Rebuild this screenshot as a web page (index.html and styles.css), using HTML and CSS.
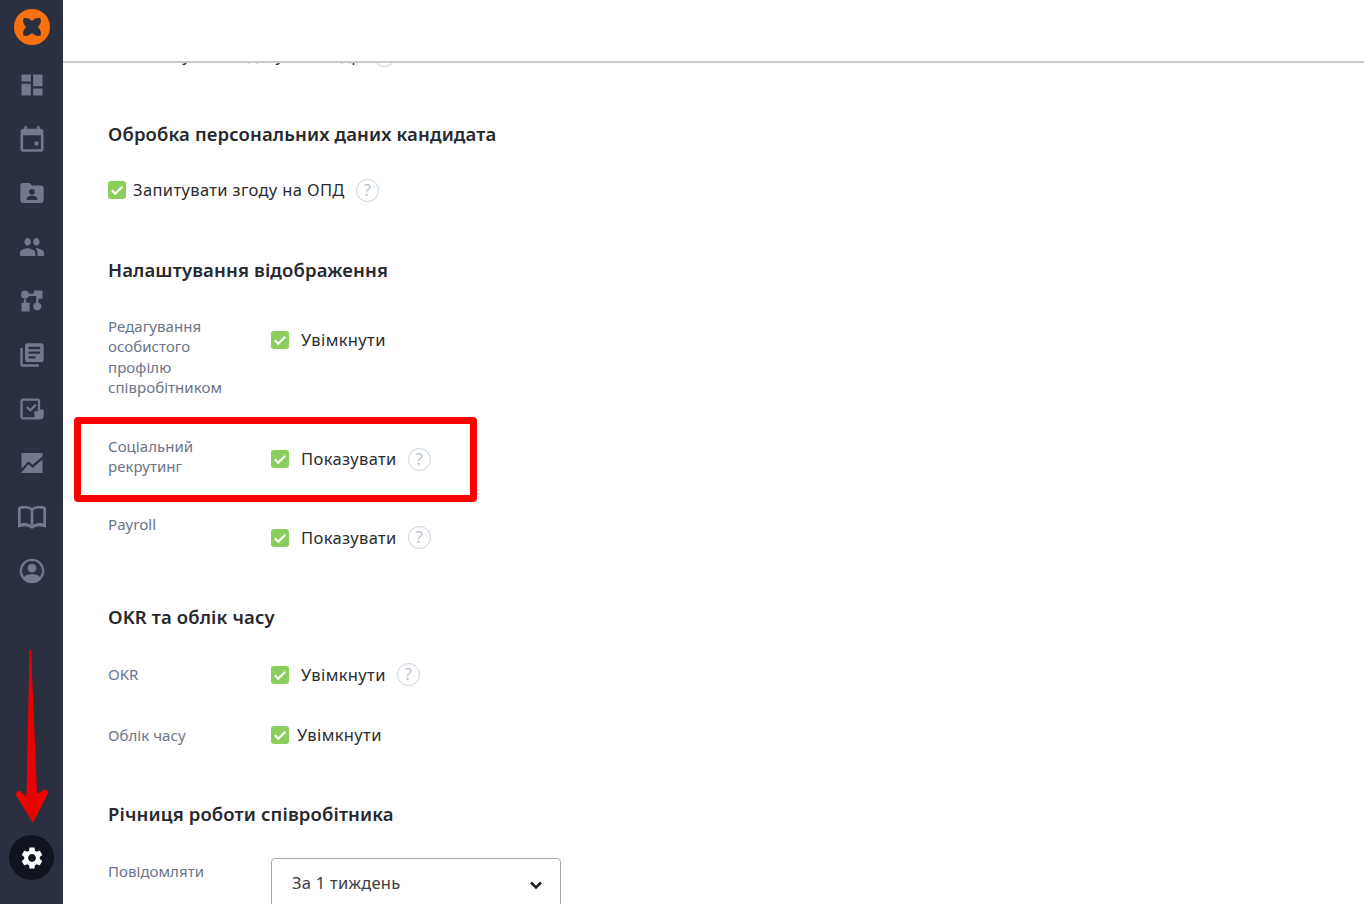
FILE: index.html
```html
<!DOCTYPE html>
<html lang="uk">
<head>
<meta charset="utf-8">
<title>Налаштування</title>
<link rel="stylesheet" href="styles.css">
</head>
<body>
<div class="app">
  <nav class="sidebar">
    <div class="logo">
      <svg viewBox="0 0 36 36" width="36" height="36"><circle cx="18" cy="18" r="18" fill="#f9700f"/><path d="M9.500 9.500c3-1.200 6 .2 8.500 2.500 2.500-2.300 5.500-3.700 8.500-2.500 1.200 3-.2 6-2.500 8.500 2.300 2.500 3.700 5.500 2.500 8.500-3 1.200-6-.2-8.500-2.500-2.500 2.300-5.500 3.700-8.500 2.500-1.200-3 .2-6 2.500-8.500-2.300-2.500-3.700-5.500-2.500-8.500z" fill="#2b3040"/></svg>
    </div>
    <div class="nav-list">
      <a class="nav-item"><svg class="ico" viewBox="0 0 24 24"><path d="M3 3h8v6H3zM3 11h8v10H3zM13 3h8v10h-8zM13 15h8v6h-8z"/></svg></a>
      <a class="nav-item"><svg class="ico" viewBox="1 0 22 22"><path d="M17 13h-3v3h3v-3zM16 1v2H8V1H6v2H5c-1.110 0-1.990.9-1.990 2L3 19c0 1.100.89 2 2 2h14c1.100 0 2-.9 2-2V5c0-1.100-.9-2-2-2h-1V1h-2zm3 18H5V8h14v11z"/></svg></a>
      <a class="nav-item"><svg class="ico" viewBox="0 0 24 24"><path fill-rule="evenodd" d="M20 5.500h-8l-2-2H4c-1.100 0-2 .9-2 2v13c0 1.100.9 2 2 2h16c1.100 0 2-.9 2-2v-11c0-1.100-.9-2-2-2zM12 8.500a2.500 2.500 0 1 1 0 5 2.500 2.500 0 0 1 0-5zM7.500 18v-1.200c0-1.700 3-2.600 4.500-2.600s4.500.9 4.500 2.600V18z"/></svg></a>
      <a class="nav-item"><svg class="ico people" viewBox="1 5 22 14" preserveAspectRatio="none"><path d="M16 11c1.660 0 2.990-1.340 2.990-3S17.660 5 16 5c-1.660 0-3 1.340-3 3s1.340 3 3 3zm-8 0c1.660 0 2.990-1.340 2.990-3S9.660 5 8 5C6.340 5 5 6.340 5 8s1.340 3 3 3zm0 2c-2.330 0-7 1.170-7 3.500V19h14v-2.500c0-2.330-4.670-3.500-7-3.500zm8 0c-.29 0-.62.02-.97.05 1.160.84 1.970 1.970 1.970 3.450V19h6v-2.500c0-2.330-4.670-3.500-7-3.500z"/></svg></a>
      <a class="nav-item"><svg class="ico" viewBox="0 0 24 24"><path d="M6 3a3.500 3.500 0 0 1 3.400 2.700h4.100V3H21v7h-3.500v3.200a3.500 3.500 0 1 1-2 0V7.700H9.400A3.500 3.500 0 1 1 6 3zM5 10.500h2v3h3V21H3v-7.500h2z"/></svg></a>
      <a class="nav-item"><svg class="ico" viewBox="0 0 24 24"><path d="M4 6H2v14c0 1.100.9 2 2 2h14v-2H4V6zm16-4H8c-1.100 0-2 .9-2 2v12c0 1.100.9 2 2 2h12c1.100 0 2-.9 2-2V4c0-1.100-.9-2-2-2zm-1 9H9V9h10v2zm-4 4H9v-2h6v2zm4-8H9V5h10v2z"/></svg></a>
      <a class="nav-item"><svg class="ico" viewBox="0 0 24 24"><path fill-rule="evenodd" d="M4.500 3H17c1.100 0 2 .9 2 2v7.500h3v5.500c0 1.900-1.500 3-3 3H4.500C3.100 21 2 19.900 2 18.500v-13C2 4.100 3.100 3 4.500 3zM4 5v13.500c0 .3.2.5.5.5H14.500c-.3-.5-.5-1-.5-1.500V14h3V5zM7 11l1.400-1.400 2.100 2.100 4.100-4.100L16 9l-5.500 5.500z"/></svg></a>
      <a class="nav-item"><svg class="ico" viewBox="0 0 24 24"><path d="M3 3.500h18v2.800l-8.500 7.300-3.600-3.200L3 17zM3 20.500v-.6l6-6.900 3.500 3.200L21 9v11.500z"/></svg></a>
      <a class="nav-item"><svg class="ico wide" viewBox="0 0 24 24"><path fill-rule="evenodd" d="M12 5.300C10.500 4.200 8.300 3.800 6.300 3.800c-1.700 0-3.300.3-4.800 1V20c1.500-.6 3.100-.9 4.800-.9 2 0 4 .4 5 1.400l.7.500.7-.5c1-1 3-1.400 5-1.400 1.700 0 3.300.3 4.800.9V4.800c-1.500-.7-3.100-1-4.800-1-2 0-4.200.4-5.700 1.500zM3.500 6c.9-.3 1.800-.4 2.800-.4 1.700 0 3.600.4 4.700 1.300v10.800c-1.300-.8-3-1.200-4.700-1.200-1 0-1.900.1-2.800.3zM13 6.900c1.100-.9 3-1.300 4.700-1.300 1 0 1.900.1 2.800.4v10.800c-.9-.2-1.800-.3-2.800-.3-1.700 0-3.400.4-4.700 1.200z"/></svg></a>
      <a class="nav-item"><svg class="ico" viewBox="0 0 24 24"><path fill-rule="evenodd" d="M12 1.500a10.500 10.500 0 1 1 0 21 10.500 10.500 0 0 1 0-21zm0 2a8.500 8.500 0 0 0-6.800 13.600C6.700 15.200 9.500 14.500 12 14.500s5.300.7 6.800 2.600A8.500 8.500 0 0 0 12 3.500zm0 2.200a3.800 3.800 0 1 1 0 7.600 3.800 3.800 0 0 1 0-7.600z"/></svg></a>
    </div>
    <a class="settings">
      <svg viewBox="0 0 24 24" width="26" height="26"><path fill="#fff" d="M19.140 12.940c.04-.3.060-.61.060-.94 0-.32-.02-.64-.07-.94l2.030-1.580a.49.490 0 0 0 .12-.61l-1.920-3.320a.488.488 0 0 0-.59-.22l-2.390.96c-.5-.38-1.030-.7-1.620-.94l-.36-2.540a.484.484 0 0 0-.48-.41h-3.840c-.24 0-.43.17-.47.41l-.36 2.540c-.59.24-1.130.57-1.620.94l-2.390-.96c-.22-.08-.47 0-.59.22L2.740 8.870c-.12.21-.08.47.12.61l2.030 1.580c-.05.3-.09.63-.09.94s.02.64.07.94l-2.030 1.580a.49.490 0 0 0-.12.61l1.920 3.320c.12.22.37.29.59.22l2.390-.96c.5.38 1.030.7 1.620.94l.36 2.540c.05.24.24.41.48.41h3.840c.24 0 .44-.17.47-.41l.36-2.540c.59-.24 1.130-.56 1.620-.94l2.390.96c.22.08.47 0 .59-.22l1.920-3.320c.12-.22.070-.47-.12-.61l-2.010-1.580zM12 15.600c-1.980 0-3.600-1.620-3.600-3.600s1.620-3.600 3.600-3.600 3.600 1.620 3.600 3.600-1.620 3.600-3.600 3.600z"/></svg>
    </a>
  </nav>

  <div class="main">
    <header class="topbar"></header>
    <div class="content">
      <div class="scrolled">
        <div class="check-line">
          <span class="check"><svg viewBox="0 0 18 18"><path d="M3.800 9.300l3.500 3.400L14.300 5.800" /></svg></span>
          <span class="val">Показувати в дату зміни др</span>
          <span class="help">?</span>
        </div>
      </div>

      <h2 class="title t1">Обробка персональних даних кандидата</h2>
      <div class="check-line consent">
        <span class="check"><svg viewBox="0 0 18 18"><path d="M3.800 9.300l3.500 3.400L14.300 5.800" /></svg></span>
        <span class="val">Запитувати згоду на ОПД</span>
        <span class="help">?</span>
      </div>

      <h2 class="title t2">Налаштування відображення</h2>
      <div class="row r-edit">
        <div class="label">Редагування особистого профілю співробітником</div>
        <div class="check-line gap-v">
          <span class="check"><svg viewBox="0 0 18 18"><path d="M3.800 9.300l3.500 3.400L14.300 5.800" /></svg></span>
          <span class="val">Увімкнути</span>
        </div>
      </div>
      <div class="row r-social">
        <div class="label">Соціальний рекрутинг</div>
        <div class="check-line gap-v">
          <span class="check"><svg viewBox="0 0 18 18"><path d="M3.800 9.300l3.500 3.400L14.300 5.800" /></svg></span>
          <span class="val">Показувати</span>
          <span class="help">?</span>
        </div>
      </div>
      <div class="row r-payroll">
        <div class="label">Payroll</div>
        <div class="check-line gap-v">
          <span class="check"><svg viewBox="0 0 18 18"><path d="M3.800 9.300l3.500 3.400L14.300 5.800" /></svg></span>
          <span class="val">Показувати</span>
          <span class="help">?</span>
        </div>
      </div>

      <h2 class="title t3">OKR та облік часу</h2>
      <div class="row r-okr">
        <div class="label">OKR</div>
        <div class="check-line gap-v">
          <span class="check"><svg viewBox="0 0 18 18"><path d="M3.800 9.300l3.500 3.400L14.300 5.800" /></svg></span>
          <span class="val">Увімкнути</span>
          <span class="help">?</span>
        </div>
      </div>
      <div class="row r-time">
        <div class="label">Облік часу</div>
        <div class="check-line">
          <span class="check"><svg viewBox="0 0 18 18"><path d="M3.800 9.300l3.500 3.400L14.300 5.800" /></svg></span>
          <span class="val">Увімкнути</span>
        </div>
      </div>

      <h2 class="title t4">Річниця роботи співробітника</h2>
      <div class="row r-notify">
        <div class="label">Повідомляти</div>
        <div class="select">
          <span>За 1 тиждень</span>
          <svg viewBox="0 0 14 10" width="14" height="10"><path d="M2 2.500l5 5 5-5" /></svg>
        </div>
      </div>
    </div>
  </div>

  <div class="highlight"></div>
  <svg class="arrow" viewBox="0 0 40 180" width="40" height="180">
    <defs><linearGradient id="a" x1="0" x2="1" y1="0" y2="0"><stop offset="0" stop-color="#ff0000"/><stop offset=".55" stop-color="#e80000"/><stop offset="1" stop-color="#ff0000"/></linearGradient></defs>
    <path fill="url(#a)" d="M14.500 1H16l6 144 7-4c2-1 4.500 1 3.500 4L18 174 1.500 147c-1.500-3 1.500-6 4-4.500l6 5.500z"/>
  </svg>
</div>
</body>
</html>
```

FILE: styles.css
```css
* { box-sizing: border-box; }
html, body { margin: 0; height: 100%; overflow: hidden; background: #fff; }
body { font-family: "Noto Sans", "Open Sans", sans-serif; color: #2b2b2f; }

.app { position: relative; display: flex; height: 904px; overflow: hidden; }

.sidebar {
  flex: 0 0 63px;
  background: #2b3040;
  display: flex;
  flex-direction: column;
  align-items: center;
  padding-top: 9px;
}
.logo { height: 36px; width: 36px; margin-left: 1px; }
.logo svg { display: block; }
.nav-list { display: flex; flex-direction: column; margin-top: 13px; }
.nav-item { height: 54px; width: 63px; display: flex; align-items: center; justify-content: center; }
.ico { width: 28px; height: 28px; fill: #73788f; display: block; }
.ico.wide { width: 32px; height: 32px; }
.ico.people { width: 24px; height: 18px; }
.settings {
  margin-top: auto;
  margin-bottom: 24px;
  width: 45px;
  height: 45px;
  border-radius: 50%;
  background: #11141f;
  display: flex;
  align-items: center;
  justify-content: center;
}

.main { flex: 1; display: flex; flex-direction: column; min-width: 0; }
.topbar { flex: 0 0 63px; background: #fff; border-bottom: 2px solid #cbcbcb; position: relative; z-index: 1; }
.content { flex: 1; overflow: hidden; padding-left: 45px; }

.scrolled { height: 14px; margin-top: -20px; position: relative; z-index: 0; }
.scrolled .check { visibility: hidden; }

.title { margin: 0; font-size: 18.500px; line-height: 24px; font-weight: 600; color: #26282e; letter-spacing: .13px; }
.t1 { margin-top: 65px; }
.t2 { margin-top: 56px; }
.t3 { margin-top: 55px; }
.t4 { margin-top: 55px; }

.check-line { display: flex; align-items: center; gap: 7px; height: 24px; }
.check-line.gap-v { gap: 12px; }
.check-line.consent { margin-top: 32px; }
.r-time .check-line { gap: 8px; }
.check {
  flex: 0 0 18px;
  width: 18px;
  height: 18px;
  border-radius: 3px;
  background: #8ace5c;
  display: block;
}
.check svg { display: block; width: 18px; height: 18px; fill: none; stroke: #fff; stroke-width: 2.300; }
.val { font-size: 16.500px; line-height: 24px; color: #2b2b2f; letter-spacing: .37px; }
.help {
  width: 23px;
  height: 23px;
  border: 1.500px solid #c8d0e0;
  border-radius: 50%;
  margin-left: 4px;
  color: #bcc5d6;
  font-size: 17px;
  line-height: 20px;
  text-align: center;
}
.gap-v .help { margin-left: -1px; }

.row { display: grid; grid-template-columns: 163px 1fr; align-items: start; }
.label { font-size: 15px; line-height: 20.300px; color: #6b7488; width: 130px; letter-spacing: .05px; }
.r-edit { margin-top: 34px; }
.r-edit .check-line { margin-top: 12px; }
.r-social { margin-top: 39px; }
.r-social .check-line { margin-top: 11px; }
.r-payroll { margin-top: 37px; }
.r-payroll .check-line { margin-top: 12px; }
.r-okr { margin-top: 33px; }
.r-okr .check-line { margin-top: 1px; }
.r-okr .label { padding-top: 2px; }
.r-time { margin-top: 36px; }
.r-time .label { padding-top: 2px; }
.r-notify { margin-top: 32px; }
.r-notify .label { padding-top: 3px; }

.select {
  width: 290px;
  height: 60px;
  border: 1px solid #a9a9a9;
  border-radius: 4px;
  padding: 11px 17px 0 20px;
  display: flex;
  justify-content: space-between;
  align-items: flex-start;
  font-size: 16.500px;
  line-height: 26px;
  letter-spacing: .25px;
  color: #3d3d42;
}
.select svg { margin-top: 10px; fill: none; stroke: #26282e; stroke-width: 2.600; }

.highlight {
  position: absolute;
  left: 74px;
  top: 417px;
  width: 403px;
  height: 85px;
  border: 7.500px solid #ff0000;
  border-radius: 4px;
  pointer-events: none;
}
.arrow { position: absolute; left: 15px; top: 649px; pointer-events: none; }
```
